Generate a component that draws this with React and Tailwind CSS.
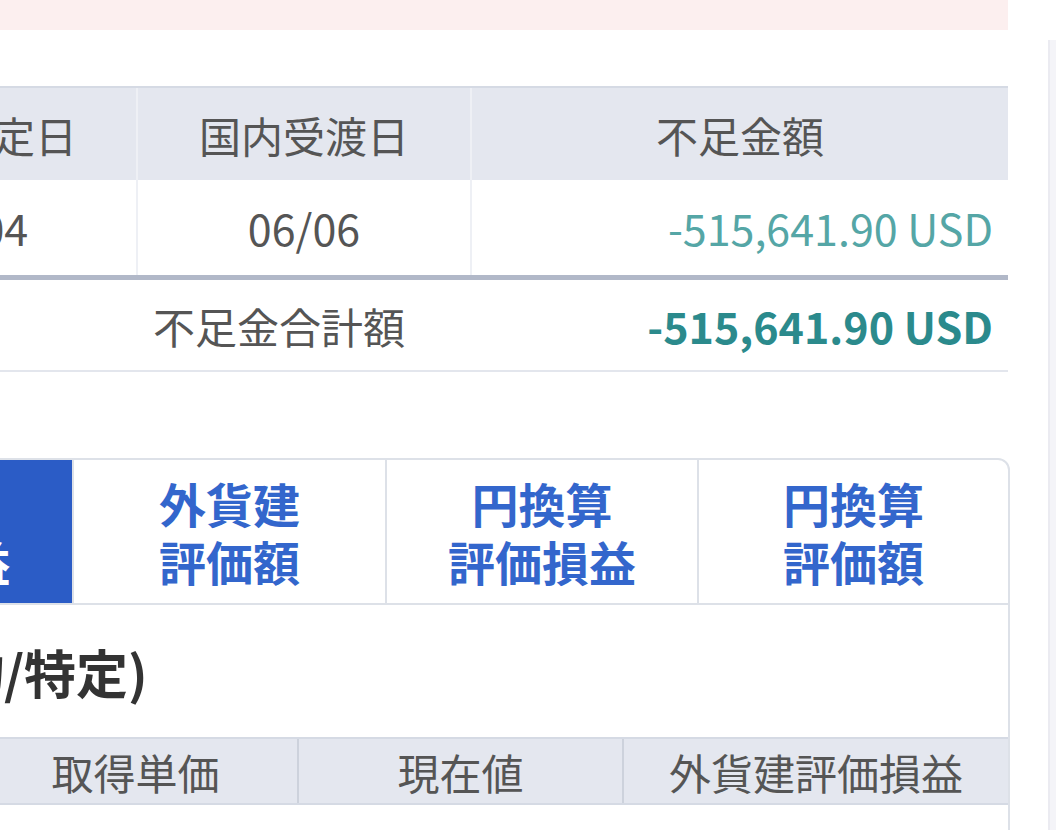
import React from 'react';

const font = { fontFamily: '"Noto Sans CJK JP", "Noto Sans", sans-serif' };

function ShortageTable() {
  return (
    <div className="-ml-[192px] w-[1200px] mt-[56px]">
      {/* header */}
      <div className="grid grid-cols-[330px_334px_536px] h-[94px] bg-[#e4e7ef] border-t-2 border-[#d5dae4] text-[42px] text-[#555]">
        <div className="flex items-center justify-center border-r-2 border-[#eef0f5]">入金予定日</div>
        <div className="flex items-center justify-center border-r-2 border-[#eef0f5]">国内受渡日</div>
        <div className="flex items-center justify-center">不足金額</div>
      </div>
      {/* row */}
      <div className="grid grid-cols-[330px_334px_536px] h-[95px] bg-white text-[43px]">
        <div className="flex items-center justify-center border-r-2 border-[#eef0f5] text-[#555]">06/04</div>
        <div className="flex items-center justify-center border-r-2 border-[#eef0f5] text-[#555]">06/06</div>
        <div className="flex items-center justify-end pr-[15px] text-[#55a6a6]">-515,641.90 USD</div>
      </div>
      {/* total */}
      <div className="grid grid-cols-[664px_536px] h-[97px] border-t-[5px] border-b-2 border-t-[#b1b8c8] border-b-[#e3e6ed]">
        <div className="flex items-center justify-end pr-[67px] text-[42px] text-[#555]">不足金合計額</div>
        <div className="flex items-center justify-end pr-[15px] text-[43px] font-bold text-[#2b8a8c]">-515,641.90 USD</div>
      </div>
    </div>
  );
}

function TabPanel() {
  const tabs = [
    ['外貨建', '評価損益'],
    ['外貨建', '評価額'],
    ['円換算', '評価損益'],
    ['円換算', '評価額'],
  ];
  return (
    <div className="-ml-[241px] w-[1251px] mt-[86px] border-2 border-[#dde1e8] rounded-tr-[12px] overflow-hidden">
      <div className="grid grid-cols-[311px_313px_312px_311px] h-[145px] border-b-2 border-[#dde1e8]">
        {tabs.map((t, i) => (
          <div
            key={i}
            className={
              i === 0
                ? 'flex flex-col items-center justify-center bg-[#2b5cc6] text-white font-bold text-[47px] leading-[58px]'
                : 'flex flex-col items-center justify-center text-[#3366cc] font-bold text-[47px] leading-[58px] border-l-2 border-[#dde1e8]'
            }
          >
            <span>{t[0]}</span>
            <span>{t[1]}</span>
          </div>
        ))}
      </div>

      <div className="h-[132px] flex items-center pt-[2px] text-[52px] font-bold text-[#333] whitespace-nowrap">
        <div className="w-[243px] shrink-0 flex justify-end">
          <span>米国株式(現物</span>
        </div>
        <span>/特定)</span>
      </div>

      <div className="grid grid-cols-[213px_325px_325px_384px] h-[68px] bg-[#e4e7ef] border-t-2 border-b-2 border-[#d5dae4] text-[42px] text-[#555]">
        <div className="flex items-center justify-center border-r-2 border-[#cdd2dc]">銘柄</div>
        <div className="flex items-center justify-center border-r-2 border-[#cdd2dc]">取得単価</div>
        <div className="flex items-center justify-center border-r-2 border-[#cdd2dc]">現在値</div>
        <div className="flex items-center justify-center">外貨建評価損益</div>
      </div>
      <div className="h-[60px] bg-white" />
    </div>
  );
}

export default function App() {
  return (
    <div className="w-[1056px] h-[830px] overflow-hidden bg-white flex" style={font}>
      <div className="w-[1010px] shrink-0 overflow-hidden">
        <div className="w-[1008px] h-[30px] bg-[#fcefef]" />
        <ShortageTable />
        <TabPanel />
      </div>
      <div className="ml-[38px] mt-[40px] flex-1 bg-[#f4f4f8] border-l-2 border-[#ebebf1]" />
    </div>
  );
}
